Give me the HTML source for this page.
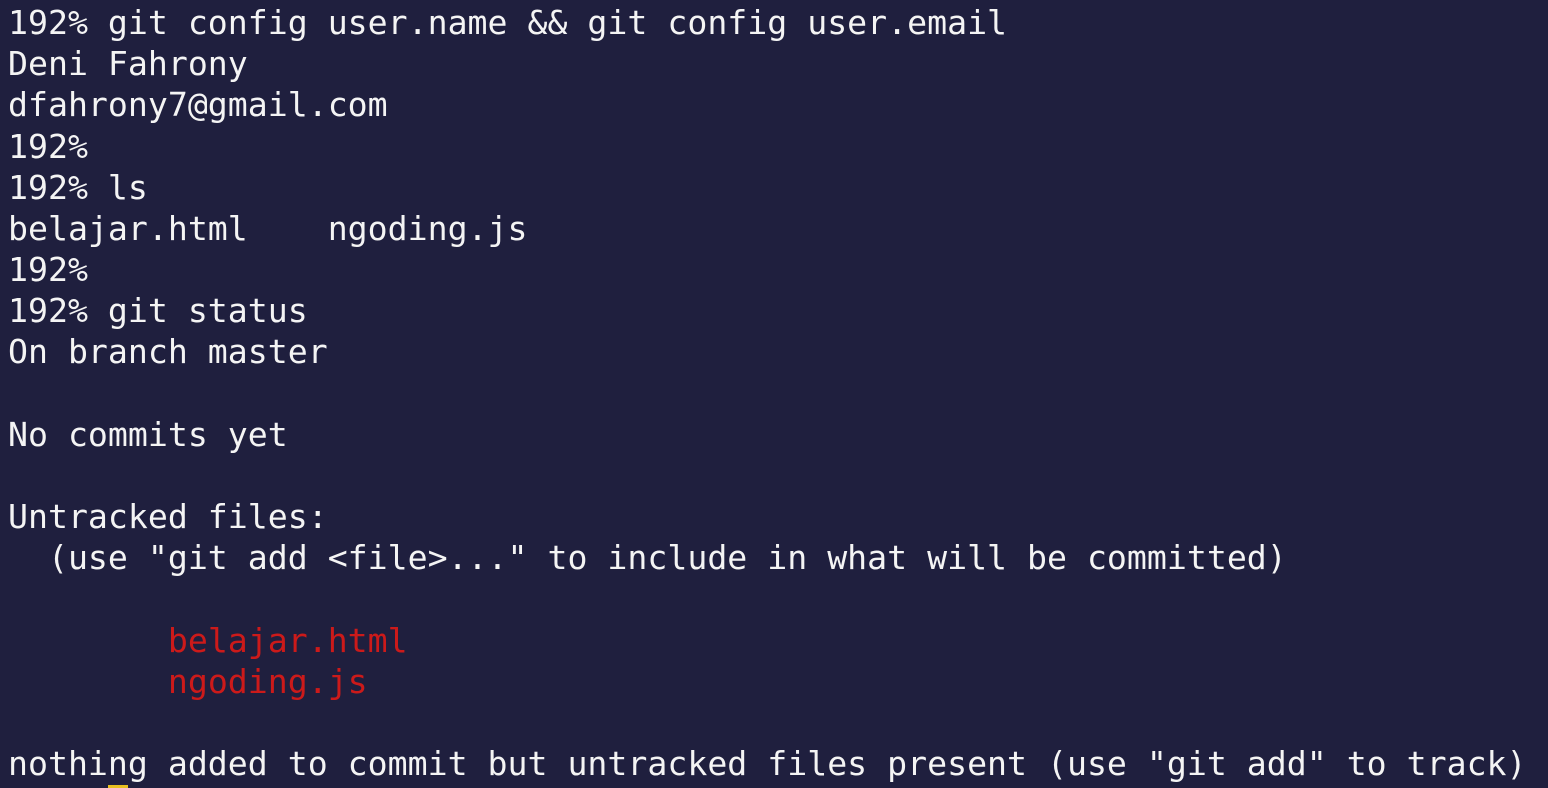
<!DOCTYPE html>
<html><head><meta charset="utf-8">
<style>
html,body{margin:0;padding:0;width:1548px;height:788px;overflow:hidden;background:#1f1f3e;}
pre{margin:0;position:absolute;left:8px;top:2px;font-family:"DejaVu Sans Mono","Liberation Mono",monospace;font-size:33.2px;line-height:41.17px;color:#f4f4f4;white-space:pre;}
.r{color:#cc1a1a;}
.cur{position:absolute;left:108px;top:785px;width:20px;height:3px;background:#e8c020;}
</style></head><body>
<pre>192% git config user.name &amp;&amp; git config user.email
Deni Fahrony
dfahrony7@gmail.com
192%
192% ls
belajar.html    ngoding.js
192%
192% git status
On branch master

No commits yet

Untracked files:
  (use "git add &lt;file&gt;..." to include in what will be committed)

        <span class="r">belajar.html</span>
        <span class="r">ngoding.js</span>

nothing added to commit but untracked files present (use "git add" to track)</pre>
<div class="cur"></div>
</body></html>
